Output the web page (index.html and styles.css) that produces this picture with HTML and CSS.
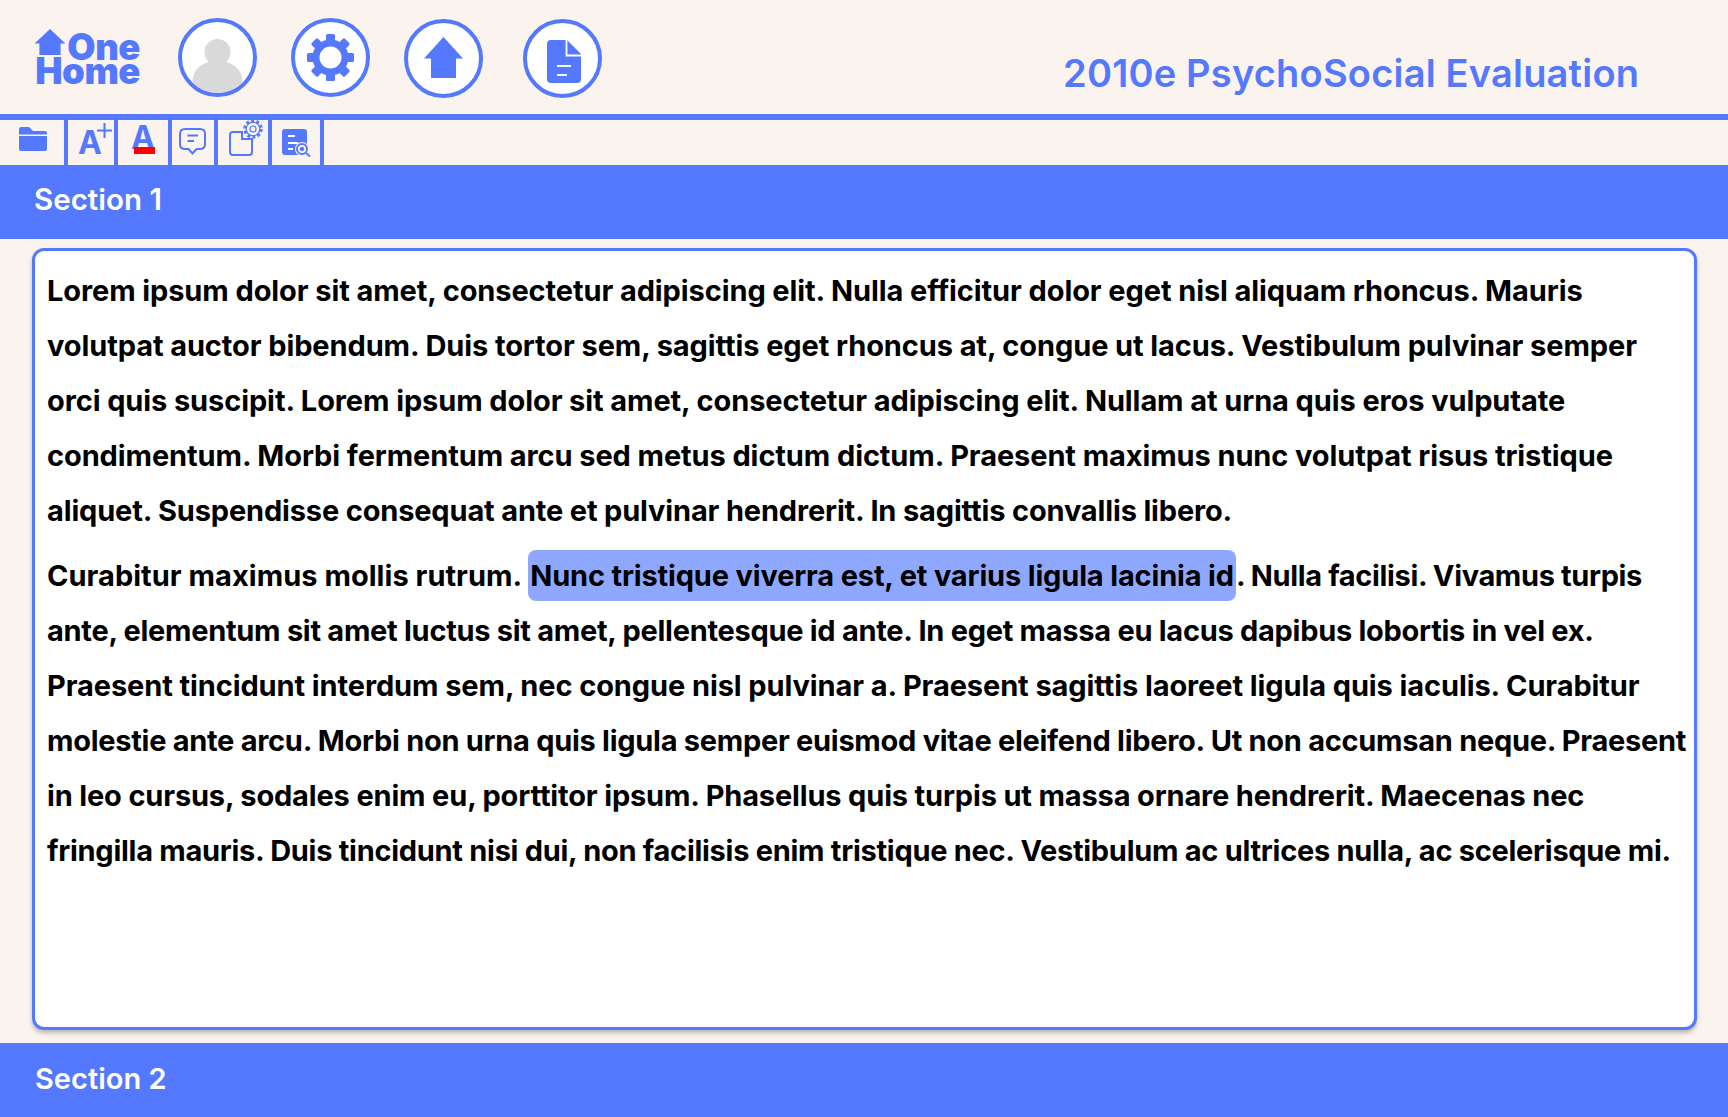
FILE: index.html
```html
<!DOCTYPE html>
<html>
<head>
  <meta name="viewport" content="width=device-width, initial-scale=1.0">
  <title>2010e PsychoSocial Evaluation</title>
  <link rel="stylesheet" href="styles.css">
</head>
<body>

  <header class="top-bar">
    <div class="logo">
      <svg class="logo-house" viewBox="0 0 32 27"><path d="M16 0 L32 15 H27 V27 H5 V15 H0 Z"/></svg>
      <span class="logo-text">One<br>Home</span>
    </div>
    <nav class="nav-circles">
      <a class="circle avatar">
        <svg viewBox="0 0 71 71"><circle cx="35.500" cy="30" r="13"/><path d="M10.500 71 V60 C10.500 46 22 39 35.500 39 C49 39 60.500 46 60.500 60 V71 Z"/></svg>
      </a>
      <a class="circle">
        <svg viewBox="0 0 71 71">
          <circle class="gear-ring" cx="35.500" cy="35.500" r="14.500"/>
          <rect x="31" y="12" width="9" height="9" rx="1.500"/>
          <rect x="31" y="12" width="9" height="9" rx="1.500" transform="rotate(45 35.500 35.500)"/>
          <rect x="31" y="12" width="9" height="9" rx="1.500" transform="rotate(90 35.500 35.500)"/>
          <rect x="31" y="12" width="9" height="9" rx="1.500" transform="rotate(135 35.500 35.500)"/>
          <rect x="31" y="12" width="9" height="9" rx="1.500" transform="rotate(180 35.500 35.500)"/>
          <rect x="31" y="12" width="9" height="9" rx="1.500" transform="rotate(225 35.500 35.500)"/>
          <rect x="31" y="12" width="9" height="9" rx="1.500" transform="rotate(270 35.500 35.500)"/>
          <rect x="31" y="12" width="9" height="9" rx="1.500" transform="rotate(315 35.500 35.500)"/>
        </svg>
      </a>
      <a class="circle circle-low">
        <svg viewBox="0 0 71 71"><path d="M35.500 14 L55 35.500 H48 V55 H23 V35.500 H16 Z"/></svg>
      </a>
      <a class="circle circle-low circle-doc">
        <svg viewBox="0 0 71 71">
          <path d="M24 17 H40 L54 31 V56 Q54 60 50 60 H24 Q20 60 20 56 V21 Q20 17 24 17 Z"/>
          <path class="doc-line" d="M39.500 16 V32.500 H55 M30 43 H44 M30 52 H40"/>
        </svg>
      </a>
    </nav>
    <h1 class="page-title">2010e PsychoSocial Evaluation</h1>
  </header>

  <div class="toolbar">
    <button class="tool tool-folder">
      <svg viewBox="0 0 64 45"><path d="M21 7 H29 L33 11 H45 Q47 11 47 13 V14.500 H19 V9 Q19 7 21 7 Z M19 16 H47 V29 Q47 31 45 31 H21 Q19 31 19 29 Z"/></svg>
    </button>
    <button class="tool tool-size">
      <span class="tool-a">A</span>
      <svg class="tool-plus" viewBox="0 0 15 15" width="15" height="15"><path d="M7.500 0 V15 M0 7.500 H15"/></svg>
    </button>
    <button class="tool tool-color">
      <span class="tool-a">A</span>
      <span class="color-bar"></span>
    </button>
    <button class="tool tool-comment">
      <svg viewBox="0 0 42 45"><path class="line" d="M13 9 H28 Q33 9 33 14 V24 Q33 29 28 29 H24.500 L20.500 33.500 L16.500 29 H13 Q8 29 8 24 V14 Q8 9 13 9 Z"/><path class="line" d="M15.500 15.500 H26 M15.500 21 H22"/></svg>
    </button>
    <button class="tool tool-page">
      <svg viewBox="0 0 50 45">
        <path class="line" d="M15 12 H24 V19 H34 V32 Q34 35 31 35 H15 Q12 35 12 32 V15 Q12 12 15 12 Z"/>
        <circle class="gear-teeth" cx="35" cy="9" r="8"/>
        <circle class="line thin" cx="35" cy="9" r="6.800"/>
        <circle class="line thin" cx="35" cy="9" r="3"/>
      </svg>
    </button>
    <button class="tool tool-search">
      <svg viewBox="0 0 48 45">
        <path d="M13 9 H32 Q35 9 35 12 V32 Q35 35 32 35 H13 Q10 35 10 32 V12 Q10 9 13 9 Z"/>
        <circle class="search-cut" cx="30" cy="29" r="7"/>
        <path class="doc-line" d="M16 16 H23 M16 23 H26 M16 29 H21"/>
        <circle class="line" cx="30" cy="29" r="5"/>
        <circle cx="30" cy="29" r="2.200"/>
        <path class="line" d="M34 33 L38 36.500"/>
      </svg>
    </button>
  </div>

  <div class="section-bar">Section 1</div>

  <main class="section-body">
    <p>Lorem ipsum dolor sit amet, consectetur adipiscing elit. Nulla efficitur dolor eget nisl aliquam rhoncus. Mauris<br>
    volutpat auctor bibendum. Duis tortor sem, sagittis eget rhoncus at, congue ut lacus. Vestibulum pulvinar semper<br>
    orci quis suscipit. Lorem ipsum dolor sit amet, consectetur adipiscing elit. Nullam at urna quis eros vulputate<br>
    condimentum. Morbi fermentum arcu sed metus dictum dictum. Praesent maximus nunc volutpat risus tristique<br>
    <span class="snug">aliquet. Suspendisse consequat ante et pulvinar hendrerit. In sagittis convallis libero.</span></p>
    <p><span class="loose">Curabitur maximus mollis rutrum. </span><mark class="highlight">Nunc tristique viverra est, et varius ligula lacinia id</mark><span class="tighter">. Nulla facilisi. Vivamus turpis</span><br>
    <span class="tight">ante, elementum sit amet luctus sit amet, pellentesque id ante. In eget massa eu lacus dapibus lobortis in vel ex.</span><br>
    Praesent tincidunt interdum sem, nec congue nisl pulvinar a. Praesent sagittis laoreet ligula quis iaculis. Curabitur<br>
    <span class="tight">molestie ante arcu. Morbi non urna quis ligula semper euismod vitae eleifend libero. Ut non accumsan neque. Praesent</span><br>
    <span class="snug">in leo cursus, sodales enim eu, porttitor ipsum. Phasellus quis turpis ut massa ornare hendrerit. Maecenas nec</span><br>
    <span class="tight">fringilla mauris. Duis tincidunt nisi dui, non facilisis enim tristique nec. Vestibulum ac ultrices nulla, ac scelerisque mi.</span></p>
  </main>

  <div class="section-bar section-bar-two">Section 2</div>

</body>
</html>
```
FILE: styles.css
```css
body {
  margin: 0;
  height: 1117px;
  overflow: hidden;
  background: #fbf3ee;
  font-family: "Inter", "Liberation Sans", sans-serif;
  display: flex;
  flex-direction: column;
}

/* Header */
.top-bar {
  display: flex;
  align-items: flex-start;
  height: 114px;
  flex-shrink: 0;
  border-bottom: 6px solid #5479ff;
}

.logo {
  position: relative;
  width: 178px;
  height: 114px;
  flex-shrink: 0;
  font-weight: 900;
  color: #5479ff;
}

.logo-house {
  position: absolute;
  left: 34px;
  top: 29px;
  width: 32px;
  height: 26px;
  fill: #5479ff;
}

.logo-text {
  position: absolute;
  right: 38px;
  top: 35px;
  font-size: 36.500px;
  line-height: 24px;
  letter-spacing: -0.5px;
  text-align: right;
}

.nav-circles {
  display: flex;
  gap: 34px;
  margin-top: 18px;
}

.circle {
  display: block;
  width: 71px;
  height: 71px;
  border: 4px solid #5479ff;
  border-radius: 50%;
  background: #fff;
  overflow: hidden;
  flex-shrink: 0;
}

.circle svg {
  display: block;
  width: 71px;
  height: 71px;
  fill: #5479ff;
}

.avatar svg {
  fill: #d9d9d9;
}

.circle-low {
  margin-top: 1px;
}

.circle-doc {
  margin-left: 6px;
}

.gear-ring {
  fill: none;
  stroke: #5479ff;
  stroke-width: 7;
}

.doc-line {
  fill: none;
  stroke: #fff;
  stroke-width: 1.800;
}

.page-title {
  margin: 50px 0 0 0;
  position: absolute;
  left: 1063px;
  font-size: 38px;
  line-height: 46px;
  font-weight: 600;
  letter-spacing: 0.2px;
  color: #5479ff;
  white-space: nowrap;
}

/* Toolbar */
.toolbar {
  display: flex;
  height: 45px;
  flex-shrink: 0;
}

.tool {
  position: relative;
  display: flex;
  align-items: center;
  justify-content: center;
  padding: 0;
  background: none;
  border: none;
  border-right: 4px solid #5479ff;
  font-family: inherit;
  fill: #5479ff;
  color: #5479ff;
}

.tool svg {
  display: block;
}

.tool > svg:only-child,
.tool-search svg,
.tool-page svg {
  width: 100%;
  height: 45px;
}

.line {
  fill: none;
  stroke: #5479ff;
  stroke-width: 2;
}

.line.thin {
  stroke-width: 1.200;
}

.gear-teeth {
  fill: none;
  stroke: #5479ff;
  stroke-width: 3.500;
  stroke-dasharray: 2.800 2.300;
}

.search-cut {
  fill: #fbf3ee;
}

.tool-folder { width: 68px; }
.tool-size { width: 50px; }
.tool-color { width: 54px; }
.tool-comment { width: 46px; }
.tool-page { width: 54px; }
.tool-search { width: 52px; }

.tool-a {
  font-size: 32px;
  line-height: 32px;
  font-weight: 700;
}

.tool-size .tool-a {
  margin: 0 2px 0 0;
}

.tool-plus {
  position: absolute;
  left: 29px;
  top: 3px;
  fill: none;
  stroke: #5479ff;
  stroke-width: 2;
}

.tool-color .tool-a {
  margin-top: -9px;
}

.color-bar {
  position: absolute;
  left: 16px;
  top: 27px;
  width: 21px;
  height: 7px;
  background: #ff0000;
}

.section-bar {
  flex-shrink: 0;
  height: 74px;
  padding-left: 34px;
  background: #5479ff;
  color: #fff;
  font-size: 29.500px;
  font-weight: 600;
  line-height: 69px;
}

.section-bar-two {
  padding-left: 35px;
  font-size: 29px;
  line-height: 72px;
}

/* Text box */
.section-body {
  flex: 1;
  box-sizing: border-box;
  margin: 9px 31px 13px 32px;
  padding: 12px 0 0 12px;
  background: #fff;
  border: 3px solid #5479ff;
  border-radius: 12px;
  box-shadow: 0 3px 4px rgba(0, 0, 0, 0.25);
  font-size: 29px;
  font-weight: 700;
  letter-spacing: -0.1px;
  line-height: 55px;
  color: #000;
  white-space: nowrap;
}

.section-body p {
  margin: 0 0 10px 0;
}

.snug {
  letter-spacing: -0.16px;
}

.tight {
  letter-spacing: -0.28px;
}

.tighter {
  letter-spacing: -0.36px;
}

.loose {
  letter-spacing: 0.03px;
}

.highlight {
  padding: 8px 2px;
  background: #8fa8ff;
  border-radius: 8px;
  color: #000;
  letter-spacing: -0.17px;
}
```
